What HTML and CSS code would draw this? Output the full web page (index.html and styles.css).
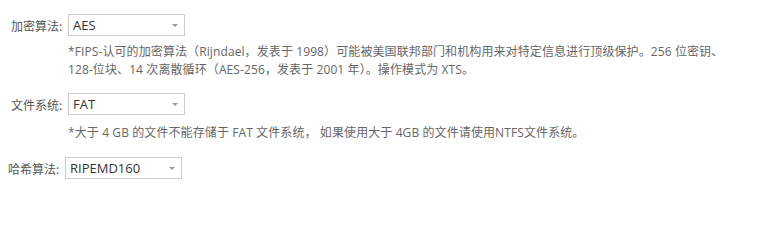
FILE: index.html
```html
<!DOCTYPE html>
<html lang="zh-CN">
<head>
<meta charset="utf-8">
<link rel="stylesheet" href="styles.css">
</head>
<body>
<div class="form">
  <div class="group group-enc">
    <div class="row">
      <label class="label">加密算法:</label>
      <div class="select"><span class="value">AES</span><span class="arrow"></span></div>
    </div>
    <p class="note note-enc">*FIPS-认可的加密算法（Rijndael，发表于 1998）可能被美国联邦部门和机构用来对特定信息进行顶级保护。256 位密钥、<br>128-位块、14 次离散循环（AES-256，发表于 2001 年）。操作模式为 XTS。</p>
  </div>
  <div class="group group-fs">
    <div class="row">
      <label class="label">文件系统:</label>
      <div class="select"><span class="value">FAT</span><span class="arrow"></span></div>
    </div>
    <p class="note note-fs">*大于 4 GB 的文件不能存储于 FAT 文件系统， 如果使用大于 4GB 的文件请使用NTFS文件系统。</p>
  </div>
  <div class="group group-hash">
    <div class="row">
      <label class="label">哈希算法:</label>
      <div class="select"><span class="value">RIPEMD160</span><span class="arrow"></span></div>
    </div>
  </div>
</div>
</body>
</html>
```
FILE: styles.css
```css
html, body {
  margin: 0;
  padding: 0;
  background: #ffffff;
}
body {
  font-family: "Open Sans", "Noto Sans CJK SC", sans-serif;
  color: #555555;
  width: 757px;
  height: 206px;
  overflow: hidden;
}
.form {
  display: flex;
  flex-direction: column;
  padding-top: 14px;
}
.group {
  display: flex;
  flex-direction: column;
  padding-left: 11px;
}
.group-fs {
  margin-top: 14px;
}
.group-hash {
  margin-top: 15px;
  padding-left: 8px;
}
.row {
  display: flex;
  align-items: center;
  gap: 6px;
}
.label {
  width: 51px;
  font-size: 12px;
  color: #555555;
  white-space: nowrap;
  font-family: "Noto Sans CJK SC", "Open Sans", sans-serif;
}
.select {
  box-sizing: border-box;
  width: 117px;
  height: 22px;
  border: 1px solid #cccccc;
  background: #ffffff;
  display: flex;
  align-items: center;
  justify-content: space-between;
  padding: 0 5px 0 4px;
}
.value {
  font-size: 13px;
  color: #333333;
  line-height: 20px;
}
.arrow {
  width: 0;
  height: 0;
  border-left: 3px solid transparent;
  border-right: 3px solid transparent;
  border-top: 3px solid #999999;
  margin-right: 1px;
}
.note {
  margin: 7px 0 0 57px;
  font-size: 12px;
  line-height: 18px;
  letter-spacing: 0.1px;
  color: #666666;
  white-space: nowrap;
}
.note-fs {
  margin-top: 9px;
}
```
